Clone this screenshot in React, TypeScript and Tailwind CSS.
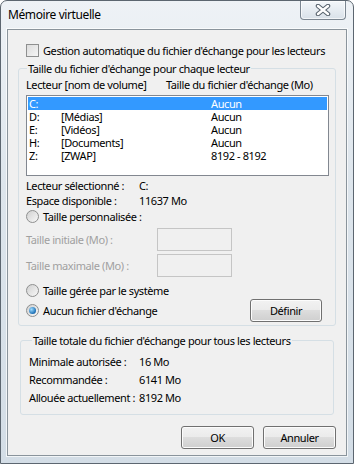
function CheckBox() {
    return (
        <span className="inline-block w-[13px] h-[13px] border border-[#8e8f8f] bg-[linear-gradient(135deg,#dcdcdc,#f5f5f5)] shrink-0" />
    )
}

function Radio({ checked, disabled }: { checked?: boolean, disabled?: boolean }) {
    return (
        <span className={"inline-flex items-center justify-center w-[13px] h-[13px] rounded-full border shrink-0 " + (disabled ? "border-[#b5b5b5] bg-[#f0f0f0]" : "border-[#8e8f8f] bg-[linear-gradient(135deg,#d0d0d0,#f8f8f8)]")}>
            {checked && <span className="block w-[7px] h-[7px] rounded-full bg-[radial-gradient(circle_at_35%_35%,#9fdcff,#1c6fb5_70%,#0d4f8c)]" />}
        </span>
    )
}

function Button({ label, width }: { label: string, width: string }) {
    return (
        <button type="button" className={"h-[23px] rounded-[3px] border border-[#707070] bg-[linear-gradient(#f2f2f2_0%,#ebebeb_48%,#dddddd_50%,#cfcfcf_100%)] shadow-[inset_0_0_0_1px_#fcfcfc] text-black " + width}>
            {label}
        </button>
    )
}

const drives = [
    { letter: "C:", name: "", size: "Aucun" },
    { letter: "D:", name: "[Médias]", size: "Aucun" },
    { letter: "E:", name: "[Vidéos]", size: "Aucun" },
    { letter: "H:", name: "[Documents]", size: "Aucun" },
    { letter: "Z:", name: "[ZWAP]", size: "8192 - 8192" },
]

export default function App() {
    return (
        <div className="w-[354px] h-[464px] flex flex-col rounded-t-[7px] border border-[#5c6670] bg-[linear-gradient(#eef2f6,#dde5ec_40%,#d3dde6)] text-[11px] leading-[15px] tracking-[-0.4px] text-black whitespace-nowrap font-['Noto_Sans',sans-serif]">
            <div className="h-[28px] flex items-start shrink-0">
                <div className="pl-[7px] pt-[6px] text-[12px] flex-1">Mémoire virtuelle</div>
                <div className="mr-[7px] w-[46px] h-[19px] flex items-center justify-center rounded-b-[4px] border border-t-0 border-[#7b8691] bg-[linear-gradient(#f4f7fa,#d9e1e9)] shadow-[inset_0_0_0_1px_#ffffffaa]">
                    <svg width="16" height="12" viewBox="0 0 16 12">
                        <path d="M3 2 L13 10 M13 2 L3 10" stroke="#55606b" strokeWidth="4.5" strokeLinecap="round" />
                        <path d="M3 2 L13 10 M13 2 L3 10" stroke="#ffffff" strokeWidth="2.5" strokeLinecap="round" />
                    </svg>
                </div>
            </div>
            <div className="mx-[6px] mb-[7px] flex-1 flex flex-col border border-[#8a949c] bg-[#f0f0f0] shadow-[0_0_0_1px_#ffffffb0]">
                <div className="flex items-center gap-[4px] pl-[18px] mt-[14px] h-[13px]">
                    <CheckBox />
                    <span>Gestion automatique du fichier d'échange pour les lecteurs</span>
                </div>

                <fieldset className="mx-[10px] mt-[4px] border border-[#d5dfe5] rounded-[3px] pl-[7px] pr-[6px] pb-[3px]">
                    <legend className="ml-[1px] px-[1px]">Taille du fichier d'échange pour chaque lecteur</legend>
                    <div className="flex h-[15px] mt-[1px]">
                        <span className="w-[140px]">Lecteur [nom de volume]</span>
                        <span>Taille du fichier d'échange (Mo)</span>
                    </div>
                    <div className="mt-[3px] h-[81px] border border-[#828790] bg-white pt-[1px] px-[1px]">
                        {drives.map((drive, id) => {
                            return (
                                <div key={id} className={"flex items-center h-[13px] leading-[12px] pl-[1px] " + (id === 0 ? "bg-[#3399ff] text-white" : "")}>
                                    <span className="w-[32px]">{drive.letter}</span>
                                    <span className="w-[150px]">{drive.name}</span>
                                    <span>{drive.size}</span>
                                </div>
                            )
                        })}
                    </div>
                    <div className="flex h-[15px] mt-[2px]">
                        <span className="w-[113px]">Lecteur sélectionné :</span>
                        <span>C:</span>
                    </div>
                    <div className="flex h-[15px]">
                        <span className="w-[113px]">Espace disponible :</span>
                        <span>11637 Mo</span>
                    </div>
                    <div className="flex items-center gap-[4px] h-[15px] mt-[1px]">
                        <Radio />
                        <span>Taille personnalisée :</span>
                    </div>
                    <div className="flex items-center h-[23px] mt-[4px] text-[#a0a0a0]">
                        <span className="w-[131px]">Taille initiale (Mo) :</span>
                        <span className="w-[75px] h-[23px] border border-[#c5c5c5] bg-[#f0f0f0]" />
                    </div>
                    <div className="flex items-center h-[23px] mt-[3px] text-[#a0a0a0]">
                        <span className="w-[131px]">Taille maximale (Mo) :</span>
                        <span className="w-[75px] h-[23px] border border-[#c5c5c5] bg-[#f0f0f0]" />
                    </div>
                    <div className="flex items-center gap-[4px] h-[15px] mt-[6px]">
                        <Radio />
                        <span>Taille gérée par le système</span>
                    </div>
                    <div className="flex items-center h-[23px] mt-[1px]">
                        <div className="flex items-center gap-[4px] flex-1">
                            <Radio checked />
                            <span>Aucun fichier d'échange</span>
                        </div>
                        <Button label="Définir" width="w-[72px] mr-[7px]" />
                    </div>
                </fieldset>

                <fieldset className="mx-[12px] mt-[7px] border border-[#d5dfe5] rounded-[3px] pl-[8px] pb-[8px]">
                    <legend className="ml-[3px] px-[1px]">Taille totale du fichier d'échange pour tous les lecteurs</legend>
                    <div className="flex h-[18px] items-center mt-[4px]">
                        <span className="w-[110px]">Minimale autorisée :</span>
                        <span>16 Mo</span>
                    </div>
                    <div className="flex h-[18px] items-center">
                        <span className="w-[110px]">Recommandée :</span>
                        <span>6141 Mo</span>
                    </div>
                    <div className="flex h-[18px] items-center">
                        <span className="w-[110px]">Allouée actuellement :</span>
                        <span>8192 Mo</span>
                    </div>
                </fieldset>

                <div className="flex justify-end gap-[9px] mt-[11px] pr-[10px]">
                    <Button label="OK" width="w-[73px]" />
                    <Button label="Annuler" width="w-[73px]" />
                </div>
            </div>
        </div>
    )
}
